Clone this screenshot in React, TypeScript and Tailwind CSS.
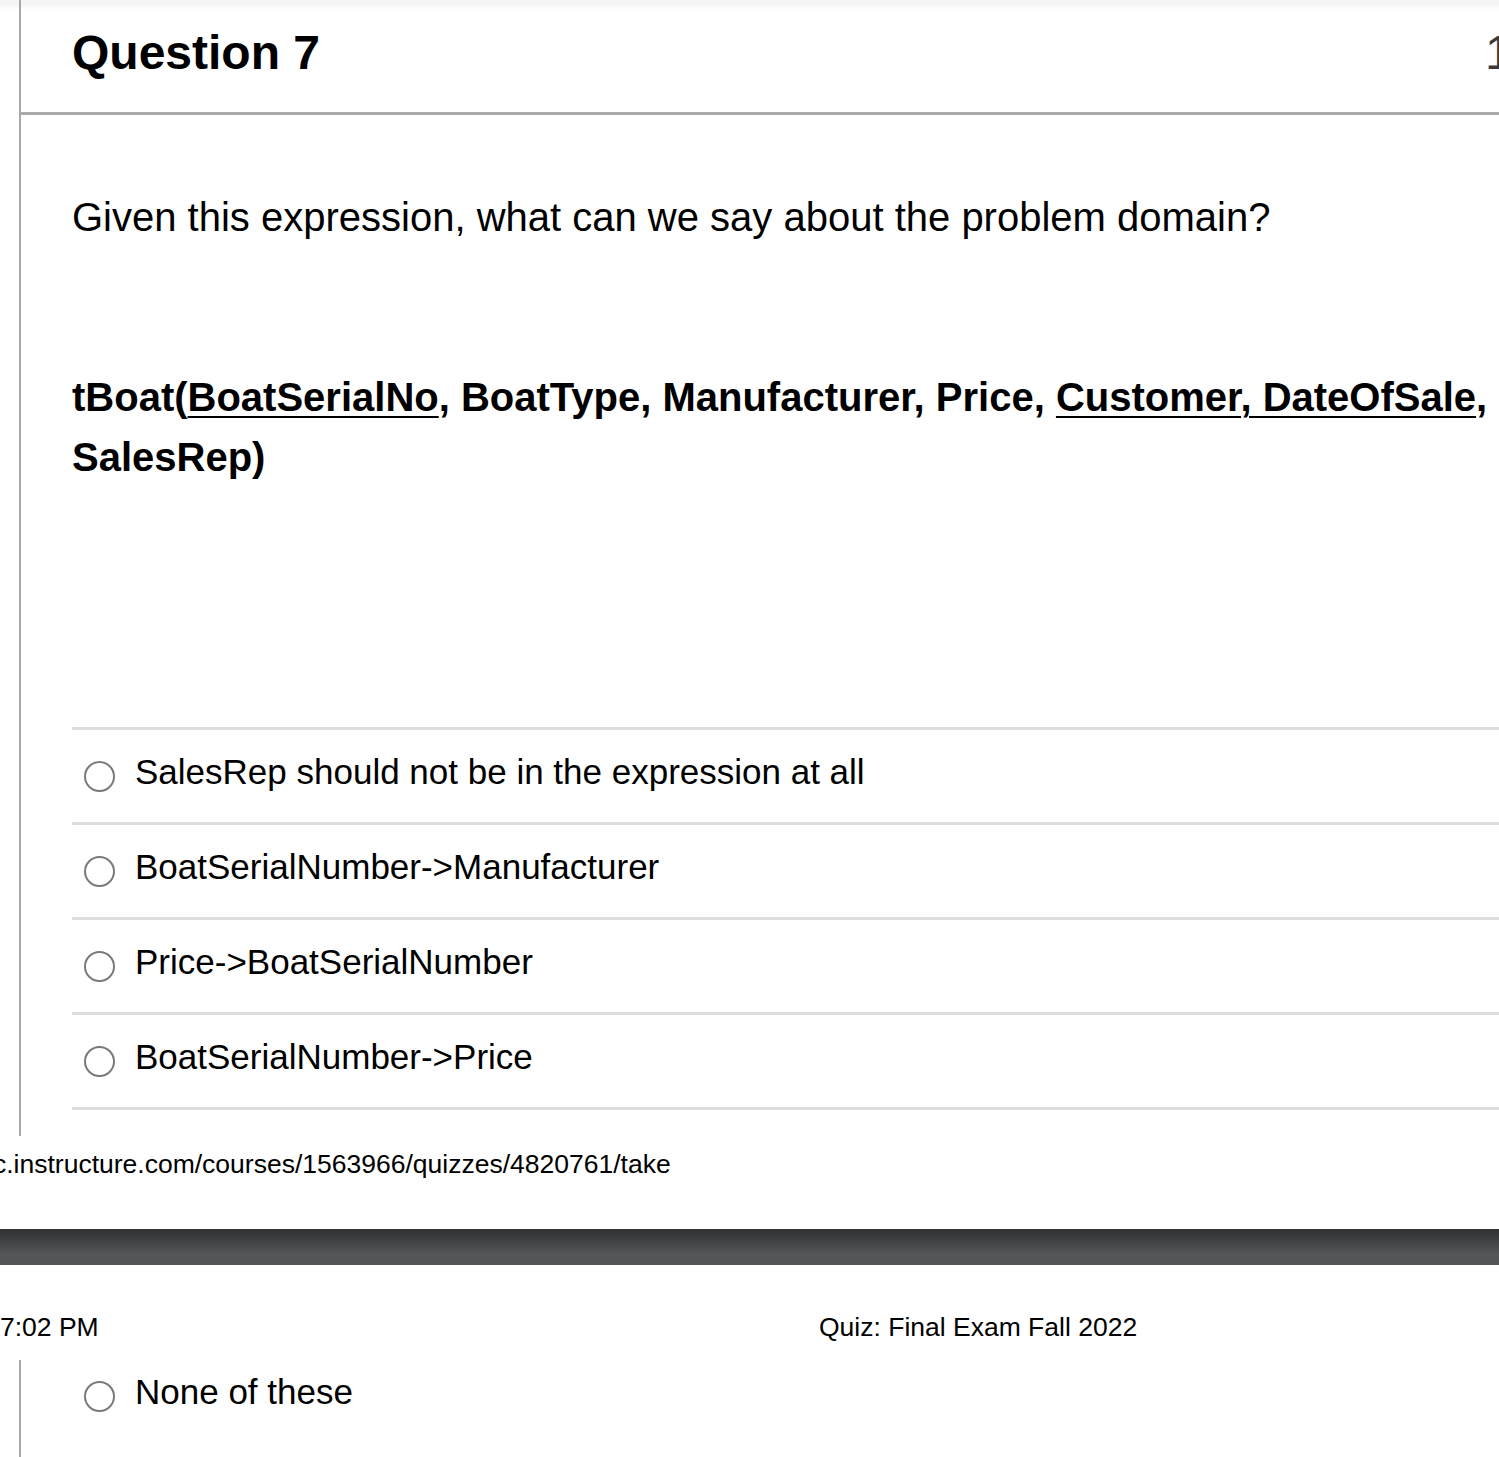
import React from "react";

const options = [
  "SalesRep should not be in the expression at all",
  "BoatSerialNumber->Manufacturer",
  "Price->BoatSerialNumber",
  "BoatSerialNumber->Price",
];

function Radio() {
  return (
    <span className="mt-[9px] ml-[12px] mr-[20px] block h-[31px] w-[31px] shrink-0 rounded-full border-2 border-[#7a7a7a] bg-white" />
  );
}

function OptionRow({ text, last }: { text: string; last?: boolean }) {
  return (
    <div
      className={
        "flex items-start border-t-[3px] border-[#dedede] pt-[22px] pb-[30px]" +
        (last ? " border-b-[3px]" : "")
      }
    >
      <Radio />
      <span className="text-[35px] leading-[40px] text-black whitespace-nowrap">{text}</span>
    </div>
  );
}

export default function App() {
  return (
    <div
      className="w-[1499px] h-[1457px] overflow-hidden bg-white text-black"
      style={{ fontFamily: '"Liberation Sans", Arial, Helvetica, sans-serif' }}
    >
      {/* Section 1 */}
      <div className="bg-[linear-gradient(to_bottom,#f5f5f5_0px,#f5f5f5_4px,#ffffff_10px)] pl-[19px]">
        <div className="w-[1621px] border-l-2 border-[#aaaaaa]">
          <div className="flex h-[115px] items-center border-b-[3px] border-[#aaaaaa] pl-[51px] pr-[51px] pb-[6px]">
            <span className="text-[48px] font-bold leading-none whitespace-nowrap">Question 7</span>
            <span className="ml-auto text-[48px] leading-none text-[#3a3a3a] whitespace-nowrap">1 pts</span>
          </div>
          <div className="pl-[51px] pt-[72px] pb-[26px]">
            <p className="text-[40px] leading-[60px] whitespace-nowrap">
              Given this expression, what can we say about the problem domain?
            </p>
            <div className="h-[120px]" />
            <p className="text-[40px] font-bold leading-[60px] w-[1440px]">
              tBoat(<span className="underline decoration-2 underline-offset-[5px]">BoatSerialNo</span>, BoatType,
              Manufacturer, Price,{" "}
              <span className="underline decoration-2 underline-offset-[5px]">Customer, DateOfSale</span>, SalesRep)
            </p>
            <div className="h-[240px]" />
            <div>
              {options.map((o, i) => (
                <OptionRow key={o} text={o} last={i === options.length - 1} />
              ))}
            </div>
          </div>
        </div>
      </div>

      {/* Print footer / header */}
      <div className="mt-[13px] -ml-[7px] text-[26.5px] leading-[30px] whitespace-nowrap">
        c.instructure.com/courses/1563966/quizzes/4820761/take
      </div>
      <div className="mt-[50px] h-[36px] bg-[linear-gradient(to_bottom,#2f3032_0%,#45484b_45%,#53575a_70%,#525659_100%)]" />
      <div className="mt-[47px] flex text-[26.5px] leading-[30px] whitespace-nowrap">
        <span className="w-[819px]">7:02 PM</span>
        <span>Quiz: Final Exam Fall 2022</span>
      </div>

      {/* Section 2 */}
      <div className="mt-[18px] pl-[19px]">
        <div className="h-[200px] w-[1621px] border-l-2 border-[#aaaaaa] pl-[51px] pt-[12px]">
          <div className="flex items-start">
            <Radio />
            <span className="text-[35px] leading-[40px] whitespace-nowrap">None of these</span>
          </div>
        </div>
      </div>
    </div>
  );
}
